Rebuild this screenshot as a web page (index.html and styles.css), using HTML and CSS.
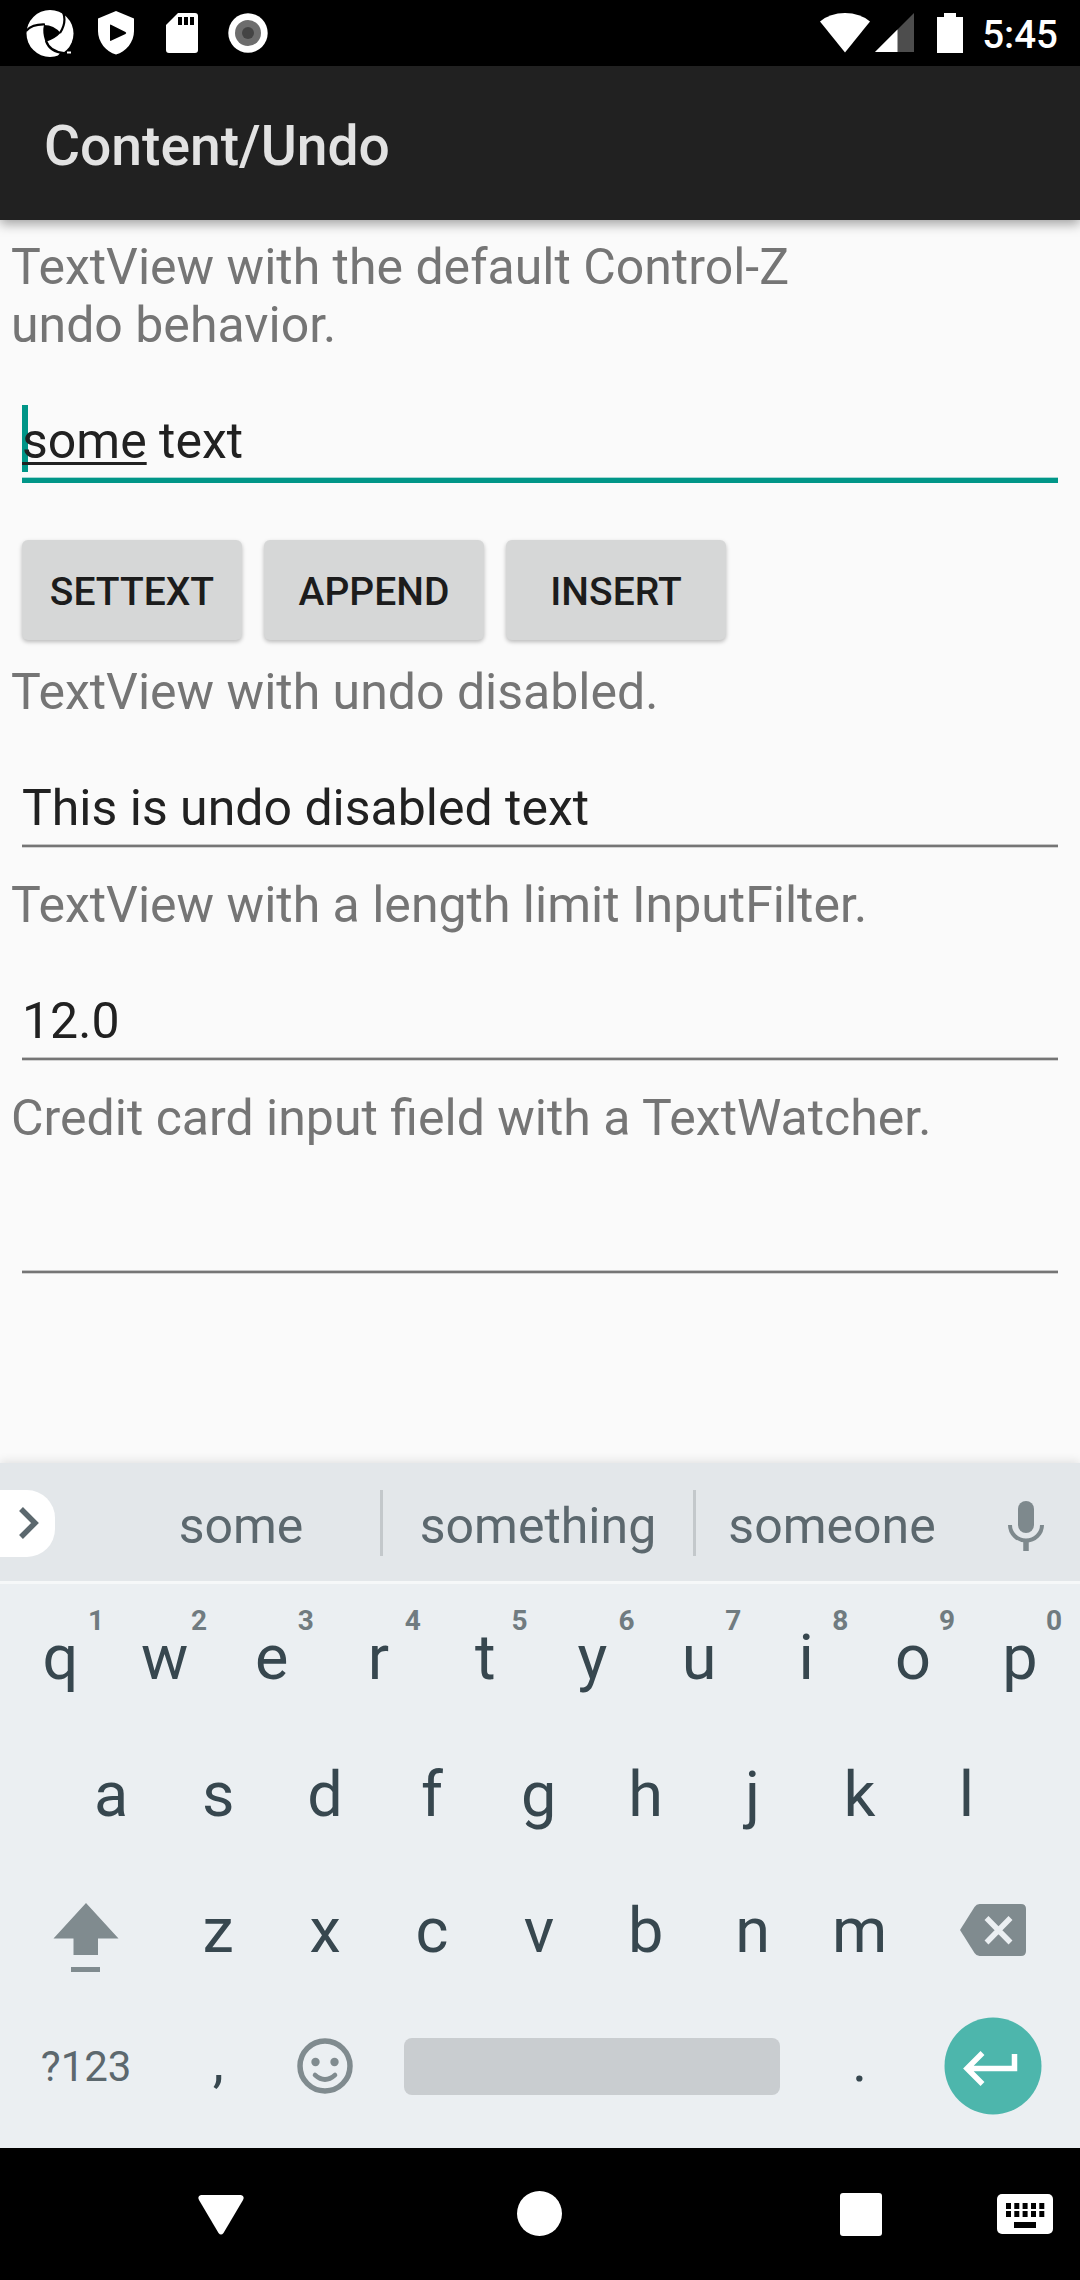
FILE: index.html
```html
<!DOCTYPE html>
<html lang="en">
<head>
<meta charset="utf-8">
<title>Content/Undo</title>
<link rel="stylesheet" href="styles.css">
</head>
<body>
<div class="status-bar">
  <div class="status-icons">
    <svg class="ic-swirl" width="48" height="48" viewBox="0 0 48 48">
      <circle cx="24" cy="23.5" r="23.5" fill="#fff"/>
      <path d="M18 15Q28 15 34.500 23Q29 29 19.500 32Q16 22 18 15Z" fill="#000"/>
      <path d="M0 21Q6 14 19 14.500M37 2Q41 12 34 23M20 31Q24 42 38 43" fill="none" stroke="#000" stroke-width="2.200"/>
      <path d="M34 43L38 43L35 47H31Z" fill="#000"/>
      <path d="M41 42.500H45" stroke="#fff" stroke-width="2"/>
    </svg>
    <svg class="ic-shield" width="36" height="44" viewBox="0 0 36 44">
      <path d="M18 0L36 7.500V20C36 31 28 41 18 43.500C8 41 0 31 0 20V7.500Z" fill="#fff"/>
      <path d="M12 14.500Q12 13 13.500 14L27.500 21Q29 22 27.500 23L13.500 29.500Q12 30.500 12 29Z" fill="#000"/>
    </svg>
    <svg class="ic-sd" width="32" height="40" viewBox="0 0 32 40">
      <path d="M12 0H29Q32 0 32 3V37Q32 40 29 40H3Q0 40 0 37V12Z" fill="#fff"/>
      <path d="M12 4h4v8h-4zM18 4h4v8h-4zM24 4h4v8h-4z" fill="#000"/>
    </svg>
    <svg class="ic-record" width="40" height="40" viewBox="0 0 40 40">
      <circle cx="20" cy="20" r="19.700" fill="#fff"/>
      <circle cx="20" cy="20" r="13" fill="#6d6d6d"/>
      <circle cx="20" cy="20" r="6" fill="#444"/>
    </svg>
  </div>
  <div class="status-system">
    <svg class="ic-wifi" width="50" height="40" viewBox="0 0 50 40">
      <path d="M0 8.500Q10 0 25 0T50 8.500L25 39.500Z" fill="#fff"/>
    </svg>
    <svg class="ic-signal" width="39" height="39" viewBox="0 0 39 39">
      <path d="M39 0V39H0Z" fill="#4d4d4d"/>
      <path d="M22.500 16.500V39H0Z" fill="#fff"/>
    </svg>
    <svg class="ic-battery" width="26" height="40" viewBox="0 0 26 40">
      <path d="M7 0H19V4H26V40H0V4H7Z" fill="#fff"/>
    </svg>
    <span class="clock">5:45</span>
  </div>
</div>

<header class="app-bar"><h1 class="app-title">Content/Undo</h1></header>

<main class="content">
  <p class="label label-wrap">TextView with the default Control-Z undo behavior.</p>
  <div class="field field-focused">
    <div class="field-text"><span class="caret"></span><span class="composing">some</span> text</div>
  </div>
  <div class="buttons">
    <button class="button">SETTEXT</button>
    <button class="button">APPEND</button>
    <button class="button">INSERT</button>
  </div>
  <p class="label">TextView with undo disabled.</p>
  <div class="field"><div class="field-text">This is undo disabled text</div></div>
  <p class="label">TextView with a length limit InputFilter.</p>
  <div class="field"><div class="field-text">12.0</div></div>
  <p class="label">Credit card input field with a TextWatcher.</p>
  <div class="field"><div class="field-text"></div></div>
</main>

<section class="keyboard">
  <div class="suggestions">
    <div class="expand">
      <svg width="55" height="67" viewBox="0 0 55 67"><path d="M21 19L35 33L21 47" fill="none" stroke="#5c686e" stroke-width="5.500"/></svg>
    </div>
    <span class="suggestion suggestion-first">some</span>
    <span class="divider"></span>
    <span class="suggestion suggestion-middle">something</span>
    <span class="divider"></span>
    <span class="suggestion suggestion-last">someone</span>
    <svg class="ic-mic" width="36" height="50" viewBox="0 0 36 50">
      <rect x="10" y="0" width="16" height="32" rx="8" fill="#7e898d"/>
      <path d="M2 24A16 15.500 0 0 0 34 24" fill="none" stroke="#7e898d" stroke-width="4"/>
      <path d="M18 39V50" stroke="#7e898d" stroke-width="5.500"/>
    </svg>
  </div>
  <div class="keys">
    <div class="key-row key-row-top">
      <span class="key key-edge">q<sup class="hint">1</sup></span>
      <span class="key">w<sup class="hint">2</sup></span>
      <span class="key">e<sup class="hint">3</sup></span>
      <span class="key">r<sup class="hint">4</sup></span>
      <span class="key">t<sup class="hint">5</sup></span>
      <span class="key">y<sup class="hint">6</sup></span>
      <span class="key">u<sup class="hint">7</sup></span>
      <span class="key">i<sup class="hint">8</sup></span>
      <span class="key">o<sup class="hint">9</sup></span>
      <span class="key">p<sup class="hint">0</sup></span>
    </div>
    <div class="key-row key-row-home">
      <span class="key">a</span><span class="key">s</span><span class="key">d</span>
      <span class="key">f</span><span class="key">g</span><span class="key">h</span>
      <span class="key">j</span><span class="key">k</span><span class="key">l</span>
    </div>
    <div class="key-row">
      <span class="key key-first">
        <svg class="ic-shift" width="66" height="70" viewBox="0 0 66 70" fill="#808b8f">
          <path d="M33 0L65.500 35.500H45V52H20.500V35.500H.5Z"/><path d="M18 64H47V69H18Z"/>
        </svg>
      </span>
      <span class="key">z</span><span class="key">x</span><span class="key">c</span>
      <span class="key">v</span><span class="key">b</span><span class="key">n</span><span class="key">m</span>
      <span class="key key-last">
        <svg class="ic-delete" width="66" height="52" viewBox="0 0 66 52">
          <path d="M0 26L14.500 3Q16.500 0 19.500 0H61Q66 0 66 5V47Q66 52 61 52H19.500Q16.500 52 14.500 49Z" fill="#808b8f"/>
          <path d="M26.500 14L50.500 38.500M50.500 14L26.500 38.500" stroke="#ebeff2" stroke-width="5.500"/>
        </svg>
      </span>
    </div>
    <div class="key-row">
      <span class="key key-first key-symbols">?123</span>
      <span class="key key-punct">,</span>
      <span class="key">
        <svg class="ic-emoji" width="56" height="56" viewBox="0 0 56 56">
          <circle cx="28" cy="28" r="25" fill="none" stroke="#808b8f" stroke-width="5.500"/>
          <circle cx="18.500" cy="24" r="4.200" fill="#808b8f"/><circle cx="37.500" cy="24" r="4.200" fill="#808b8f"/>
          <path d="M18 37Q28 46 38 37" fill="none" stroke="#808b8f" stroke-width="4.600" stroke-linecap="round"/>
        </svg>
      </span>
      <span class="key key-space"><span class="space-bar"></span></span>
      <span class="key key-punct">.</span>
      <span class="key key-last">
        <svg class="ic-enter" width="98" height="98" viewBox="0 0 98 98">
          <circle cx="49" cy="49" r="48.500" fill="#4db6ac"/>
          <path d="M38.500 36L23 51.500L38.500 67M23 51.500H70.500V37" fill="none" stroke="#fff" stroke-width="5.500"/>
        </svg>
      </span>
    </div>
  </div>
</section>

<nav class="nav-bar">
  <svg class="nav-back" width="46" height="40" viewBox="0 0 46 40"><path d="M3 0H43Q47 1 45 5L25.500 38Q23 41 20.500 38L1 5Q-1 1 3 0Z" fill="#fff"/></svg>
  <svg class="nav-home" width="45" height="45" viewBox="0 0 45 45"><circle cx="22.500" cy="22.500" r="22.500" fill="#fff"/></svg>
  <svg class="nav-recent" width="42" height="43" viewBox="0 0 42 43"><rect width="42" height="43" rx="3" fill="#fff"/></svg>
  <svg class="nav-ime" width="56" height="40" viewBox="0 0 56 40">
    <rect width="56" height="40" rx="5" fill="#fff"/>
    <path d="M9 9h5v6h-5zM17.300 9h5v6h-5zM25.600 9h5v6h-5zM34 9h5v6h-5zM42.300 9h5v6h-5zM9 17h5v6h-5zM17.300 17h5v6h-5zM25.600 17h5v6h-5zM34 17h5v6h-5zM42.300 17h5v6h-5zM17 28h22v6h-22z" fill="#000"/>
  </svg>
</nav>
</body>
</html>
```
FILE: styles.css
```css
* { box-sizing: border-box; }
body {
  margin: 0;
  width: 1080px;
  height: 2280px;
  display: flex;
  flex-direction: column;
  background: #fafafa;
  font-family: Roboto, "Liberation Sans", sans-serif;
  overflow: hidden;
}
svg { display: block; flex: none; }

.status-bar {
  height: 66px;
  flex: none;
  background: #000;
  display: flex;
  justify-content: space-between;
}
.status-icons, .status-system { display: flex; align-items: flex-start; }
.ic-swirl { margin: 10px 0 0 26px; }
.ic-shield { margin: 11px 0 0 24px; }
.ic-sd { margin: 13px 0 0 32px; }
.ic-record { margin: 13px 0 0 30px; }
.ic-wifi { margin-top: 13px; }
.ic-signal { margin: 13px 0 0 5px; }
.ic-battery { margin: 13px 0 0 23px; }
.clock {
  margin: 12px 22px 0 19px;
  line-height: 46px;
  font-size: 38.5px;
  font-weight: 500;
  color: #fff;
}

.app-bar {
  position: relative;
  height: 154px;
  flex: none;
  display: flex;
  align-items: center;
  padding: 5px 0 0 44px;
  background: #212121;
  box-shadow: 0 4px 11px rgba(0, 0, 0, .36);
}
.app-title { margin: 0; font-size: 55.2px; font-weight: 500; line-height: 64px; color: #e2e2e2; }

.content { flex: 1; padding: 18px 11px 0; }
.label { margin: 0; font-size: 50px; line-height: 58px; color: #757575; }
.label-wrap { width: 860px; }
.field {
  height: 155px;
  padding: 58px 11px 0;
}
.field-text {
  position: relative;
  height: 69px;
  font-size: 50px;
  line-height: 58px;
  color: #212121;
  background: linear-gradient(#c4c4c4 1px, #757575 1px 3px, #d2d2d2 3px) bottom / 100% 4px no-repeat;
}
.field-focused .field-text {
  height: 71px;
  background: linear-gradient(#a5d8d3 1px, #009688 1px) bottom / 100% 6px no-repeat;
}
.caret { position: absolute; left: 0; top: -7px; width: 6px; height: 67px; background: #009688; }
.composing { position: relative; text-decoration: underline; text-decoration-thickness: 3px; text-underline-offset: 4px; text-decoration-skip-ink: none; }

.buttons { display: flex; gap: 22px; padding: 31px 11px 23px; }
.button {
  width: 220px;
  height: 100px;
  padding: 3px 0 0;
  border: 0;
  border-radius: 6px;
  background: #d6d7d7;
  box-shadow: 0 2px 4px rgba(0, 0, 0, .26);
  font: 500 39px/46px Roboto, "Liberation Sans", sans-serif;
  color: #1c1c1c;
}

.keyboard { height: 685px; flex: none; background: #ebeff2; box-shadow: 0 -2px 9px rgba(0, 0, 0, .1); }
.suggestions {
  height: 121px;
  display: flex;
  align-items: flex-start;
  background: #e3e7ea;
  border-bottom: 3px solid #f6f8f9;
  padding-top: 27px;
}
.expand { width: 55px; height: 67px; border-radius: 0 28px 28px 0; background: #fff; }
.suggestion { padding-top: 7px; text-align: center; font-size: 50px; line-height: 58px; color: #5c686e; }
.suggestion-first { width: 278px; margin-left: 47px; }
.suggestion-middle { width: 310px; }
.suggestion-last { width: 272px; }
.divider { width: 3px; height: 66px; background: #c3c8cb; }
.ic-mic { margin: 11px 0 0 40px; }

.keys { padding-top: 20px; }
.key-row { height: 136.5px; display: flex; padding-left: 7.5px; }
.key-row-top { padding-left: 4.4px; }
.key-row-home { padding-left: 57.8px; }
.key {
  position: relative;
  flex: none;
  width: 106.9px;
  height: 136.5px;
  display: flex;
  justify-content: center;
  font-size: 63px;
  line-height: 108px;
  color: #37474f;
}
.key-edge { padding-left: 5px; }
.key-first { width: 157.3px; }
.key-last { width: 160px; }
.hint {
  position: absolute;
  left: 79.6px;
  top: 1px;
  font-size: 28px;
  font-weight: 700;
  line-height: 32px;
  color: #707b80;
}
.key-edge .hint { left: 83.6px; }
.key-symbols { font-size: 42px; line-height: 106px; color: #5c686e; }
.key-punct { font-size: 56px; line-height: 97px; }
.key-space { width: 427.6px; }
.space-bar { width: 376px; height: 57px; border-radius: 8px; margin-top: 24px; background: #c9cdd0; }
.ic-shift { margin-top: 26px; }
.ic-delete { margin-top: 27px; }
.ic-emoji { margin-top: 24px; }
.ic-enter { margin-top: 3px; }

.nav-bar { height: 132px; flex: none; display: flex; align-items: flex-start; background: #000; }
.nav-back { margin: 47px 0 0 197.5px; }
.nav-home { margin: 43px 0 0 273.5px; }
.nav-recent { margin: 45px 0 0 278px; }
.nav-ime { margin: 46px 0 0 115px; }
```
